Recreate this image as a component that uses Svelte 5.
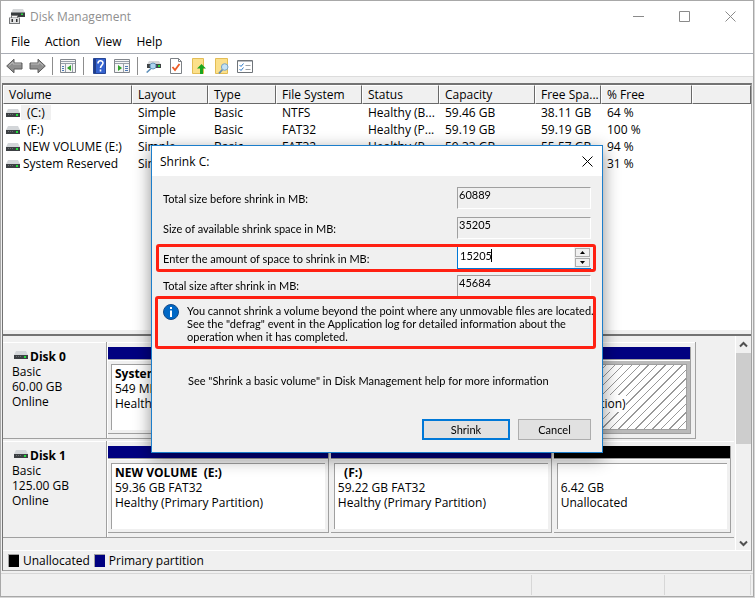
<script>
  const menus = ['File', 'Action', 'View', 'Help'];
  const columns = ['Volume', 'Layout', 'Type', 'File System', 'Status', 'Capacity', 'Free Spa...', '% Free', ''];
  const volumes = [
    ['(C:)', 'Simple', 'Basic', 'NTFS', 'Healthy (B...', '59.46 GB', '38.11 GB', '64 %', ''],
    ['(F:)', 'Simple', 'Basic', 'FAT32', 'Healthy (P...', '59.19 GB', '59.19 GB', '100 %', ''],
    ['NEW VOLUME (E:)', 'Simple', 'Basic', 'FAT32', 'Healthy (P...', '59.33 GB', '55.57 GB', '94 %', ''],
    ['System Reserved', 'Simple', 'Basic', 'NTFS', 'Healthy (S...', '549 MB', '169 MB', '31 %', '']
  ];
  const disks = [
    {
      name: 'Disk 0', size: '60.00 GB', short: true,
      parts: [
        { name: 'System Reserved', size: '549 MB NTFS', state: 'Healthy (System, Active)', grow: 196 },
        { name: '(C:)', size: '59.46 GB NTFS', state: 'Healthy (Boot, Page File, Crash Dump, Primary Partition)', grow: 385, selected: true }
      ]
    },
    {
      name: 'Disk 1', size: '125.00 GB', short: false,
      parts: [
        { name: 'NEW VOLUME  (E:)', size: '59.36 GB FAT32', state: 'Healthy (Primary Partition)', grow: 222 },
        { name: '  (F:)', size: '59.22 GB FAT32', state: 'Healthy (Primary Partition)', grow: 222 },
        { name: ' ', size: '6.42 GB', state: 'Unallocated', grow: 178, free: true }
      ]
    }
  ];
  let amount = $state('15205');
  const step = (n) => (amount = String(Number(amount) + n));
</script>

{#snippet drive()}
  <svg class="drive" width="14" height="8" viewBox="0 0 14 8" aria-hidden="true">
    <path d="M2 0h10l2 4H0z" fill="#d3d6d9" />
    <path d="M0 4h14v4H0z" fill="#3c4043" />
    <path d="M2 5.500h5" stroke="#6a6e72" stroke-dasharray="1 1" />
    <path d="M10 5h2v2h-2z" fill="#22e03c" />
  </svg>
{/snippet}

<div class="window">
  <header class="titlebar">
    <svg width="16" height="15" viewBox="0 0 16 15" aria-hidden="true">
      <path d="M4 0h10l2 4H2z" fill="#d5d7d9" />
      <path d="M2 3.500h14V8H2z" fill="#383c3e" />
      <path d="M12 4.500h2v1.500h-2z" fill="#27d83b" />
      <path d="M2.500 6.500h6v3h-6z" fill="#f4f4f4" stroke="#777" />
      <path d="M0 8.500h11V15H0z" fill="#77797b" />
      <path d="M1 9h9v5H1z" fill="#e2e3e4" />
      <path d="M2.500 10h1.500v3H2.500zM7 10h1.500v3H7z" fill="#333" />
    </svg>
    <h1>Disk Management</h1>
    <div class="controls">
      <button aria-label="Minimize"><svg width="11" height="11"><path d="M0 5.500h11" /></svg></button>
      <button aria-label="Maximize"><svg width="11" height="11"><path d="M.5.5h10v10H.5z" /></svg></button>
      <button aria-label="Close"><svg width="11" height="11"><path d="M.5.5l10 10M10.500.5l-10 10" /></svg></button>
    </div>
  </header>

  <nav class="menu">
    {#each menus as m}<button>{m}</button>{/each}
  </nav>

  <div class="toolbar">
    <button aria-label="Back"><svg width="17" height="16" viewBox="0 0 17 16"><path d="M.7 8L8 1.200V5h8v6H8v3.800z" fill="#8f8f8f" stroke="#5c5c5c" /><path d="M3 7.500L7 4v2h8" fill="none" stroke="#bcbcbc" /></svg></button>
    <button aria-label="Forward"><svg width="17" height="16" viewBox="0 0 17 16"><path d="M16.300 8L9 1.200V5H1v6h8v3.800z" fill="#8f8f8f" stroke="#5c5c5c" /><path d="M2 6h8V4l4 3.500" fill="none" stroke="#bcbcbc" /></svg></button>
    <i></i>
    <button aria-label="Show console tree"><svg width="16" height="14" viewBox="0 0 16 14"><path d="M.5.5h15v13H.5z" fill="#f5f5f5" stroke="#82868c" /><path d="M1 2.500h14M1 4.500h14M5.500 5v8M12.500 5v8" stroke="#98a0aa" /><path d="M2 7.500h2M2 9.500h2M2 11.500h2" stroke="#4d79b5" /><path d="M11 6v6L7 9z" fill="#2fa32b" /></svg></button>
    <i></i>
    <button aria-label="Help"><svg width="13" height="16" viewBox="0 0 13 16"><path d="M.5.5h12v15H.5z" fill="#3462cf" stroke="#274695" /><path d="M1 1h2v14H1z" fill="#203d88" /><path d="M5 5.500c0-3.500 5-3.500 5-.4 0 2-2.500 2.200-2.500 4.900M7.500 11.500v2" fill="none" stroke="#fff" stroke-width="1.600" /></svg></button>
    <button aria-label="Show action pane"><svg width="16" height="14" viewBox="0 0 16 14"><path d="M.5.5h15v13H.5z" fill="#f5f5f5" stroke="#82868c" /><path d="M1 2.500h14M1 4.500h14M9.500 5v8" stroke="#98a0aa" /><path d="M11 7.500h3M11 9.500h3M11 11.500h3" stroke="#4d79b5" /><path d="M4 6v6l4-3z" fill="#2fa32b" /></svg></button>
    <i></i>
    <button aria-label="Connect disk"><svg width="15" height="13" viewBox="0 0 15 13"><path d="M3 1h10l2 3.500H1z" fill="#d5d7d9" /><path d="M1 4h14v4H1z" fill="#404446" /><path d="M12 5h2v2h-2z" fill="#27d83b" /><path d="M5 8.500L.7 12.500" stroke="#5d8fb9" stroke-width="1.600" /><circle cx="7" cy="6" r="3" fill="#aed4ee" stroke="#6496ba" /></svg></button>
    <button aria-label="Check"><svg width="12" height="16" viewBox="0 0 12 16"><path d="M.5.5h8l3 3v12H.5z" fill="#fff" stroke="#7c8186" /><path d="M8.500.5v3h3" fill="none" stroke="#7c8186" /><path d="M2.500 9l2.500 3 4.500-6" fill="none" stroke="#ed5b24" stroke-width="1.800" /></svg></button>
    <button aria-label="Up folder"><svg width="14" height="16" viewBox="0 0 14 16"><path d="M.5.500H11.500V15.500H.5z" fill="#fbe08b" stroke="#e3bd55" /><path d="M9.500 6L14 10.500h-3V16H8v-5.500H5z" fill="#1ba51f" /></svg></button>
    <button aria-label="Find folder"><svg width="14" height="16" viewBox="0 0 14 16"><path d="M.5.5h12v15H.5z" fill="#fbe08b" stroke="#e3bd55" /><path d="M7.500 11.500L4 15.300" stroke="#668fb2" stroke-width="1.800" /><circle cx="9.700" cy="9" r="3.300" fill="#c4e2f5" stroke="#77a3c4" /></svg></button>
    <button aria-label="Options"><svg width="16" height="13" viewBox="0 0 16 13"><path d="M.5.5h15v12H.5z" fill="#fff" stroke="#6f7479" /><path d="M1 1.500h14" stroke="#b7bcc2" /><path d="M2.500 5l1.500 1.500 2.500-3M2.500 9l1.500 1.500 2.500-3" fill="none" stroke="#2a78c8" /><path d="M8.500 5.500h5M8.500 9.500h5" stroke="#9ba1a7" /></svg></button>
  </div>

  <main>
    <div class="list">
      <table>
        <colgroup>
          <col class="c1" /><col class="c2" /><col class="c3" /><col class="c4" /><col class="c5" /><col class="c6" /><col class="c7" /><col class="c8" /><col />
        </colgroup>
        <thead>
          <tr>{#each columns as c}<th scope="col">{c}</th>{/each}</tr>
        </thead>
        <tbody>
          {#each volumes as row, r}
            <tr>
              {#each row as cell, i}
                {#if i === 0}
                  <td><div class="vol">{@render drive()}<span class:indent={r < 2} class:current={r === 0}>{cell}</span></div></td>
                {:else}
                  <td>{cell}</td>
                {/if}
              {/each}
            </tr>
          {/each}
        </tbody>
      </table>
    </div>
    <div class="splitter"></div>

    <div class="lower">
      <div class="disks">
        {#each disks as d}
          <section class="disk">
            <div class="info">
              <h2>{@render drive()}{d.name}</h2>
              <p>Basic</p>
              <p>{d.size}</p>
              <p>Online</p>
            </div>
            <div class="map" class:short={d.short}>
              {#each d.parts as p}
                <div class="part" class:free={p.free} class:selected={p.selected} style:flex-grow={p.grow}>
                  <div class="bar"></div>
                  <div class="frame">
                    <div class="box">
                      <p><b>{p.name}</b></p>
                      <p><span>{p.size}</span></p>
                      <p><span>{p.state}</span></p>
                    </div>
                  </div>
                </div>
              {/each}
            </div>
          </section>
        {/each}
      </div>
      <div class="scroll">
        <button aria-label="Scroll up"><svg width="9" height="7"><path d="M1 5.500l3.500-3.500L8 5.500" /></svg></button>
        <div class="thumb"></div>
        <button aria-label="Scroll down"><svg width="9" height="7"><path d="M1 1.500L4.500 5 8 1.500" /></svg></button>
      </div>
    </div>

    <div class="legend">
      <span class="swatch black"></span>Unallocated
      <span class="swatch"></span>Primary partition
    </div>
  </main>

  <footer><span></span><span></span><span></span></footer>
</div>

<div class="overlay">
  <form class="dialog" aria-label="Shrink C:" onsubmit={(e) => e.preventDefault()}>
    <div class="caption">
      <h2>Shrink C:</h2>
      <button type="button" aria-label="Close dialog"><svg width="11" height="11"><path d="M.5.5l10 10M10.500.5l-10 10" /></svg></button>
    </div>
    <div class="row">
      <label for="before">Total size before shrink in MB:</label>
      <output id="before">60889</output>
    </div>
    <div class="row second">
      <label for="available">Size of available shrink space in MB:</label>
      <output id="available">35205</output>
    </div>
    <div class="row marked">
      <label for="amount">Enter the amount of space to shrink in MB:</label>
      <div class="spin">
        <input id="amount" type="text" inputmode="numeric" bind:value={amount} />
        <span class="caret"></span>
        <div class="arrows">
          <button type="button" aria-label="Increase" onclick={() => step(1)}><svg width="5" height="3"><path d="M0 3h5L2.500 0z" /></svg></button>
          <button type="button" aria-label="Decrease" onclick={() => step(-1)}><svg width="5" height="3"><path d="M0 0h5L2.500 3z" /></svg></button>
        </div>
      </div>
    </div>
    <div class="row last">
      <label for="after">Total size after shrink in MB:</label>
      <output id="after">45684</output>
    </div>
    <div class="notice">
      <svg width="16" height="16" viewBox="0 0 16 16" aria-hidden="true"><circle cx="8" cy="8" r="7.500" fill="#0068c6" stroke="#174a86" /><path d="M7 3h2v2H7zM7 6.500h2V13H7z" fill="#fff" /></svg>
      <p>You cannot shrink a volume beyond the point where any unmovable files are located.<br />See the "defrag" event in the Application log for detailed information about the<br />operation when it has completed.</p>
    </div>
    <p class="more">See "Shrink a basic volume" in Disk Management help for more information</p>
    <div class="actions">
      <button class="primary">Shrink</button>
      <button type="button">Cancel</button>
    </div>
  </form>
</div>

<style>
  :global(body) { margin: 0; background: #d6d6d6; }
  :global(*) { box-sizing: border-box; }
  h1, h2, p { margin: 0; font-size: inherit; font-weight: 400; }
  button { font: inherit; color: inherit; background: none; border: 0; padding: 0; }
  svg { display: block; flex: none; }

  .window {
    display: flex; flex-direction: column;
    min-height: calc(100vh - 1px); margin: 0 1px 1px 0;
    border: 1px solid #a8a8a8; background: #f0f0f0;
    font: 12px/15px "Open Sans", "Noto Sans", sans-serif; color: #000;
  }
  .titlebar { display: flex; align-items: center; height: 30px; padding-left: 8px; gap: 5px; background: #fff; color: #8f8f8f; }
  .controls { display: flex; margin-left: auto; }
  .controls button { display: flex; align-items: center; justify-content: center; width: 46px; height: 28px; }
  .controls path { fill: none; stroke: #8a8a8a; }
  .menu { display: flex; height: 23px; padding: 0 0 1px 10px; gap: 15px; background: #fff; border-bottom: 1px solid #a9adb5; }
  .toolbar { display: flex; align-items: center; height: 23px; padding: 2px 0 0 5px; gap: 7px; background: #fff; border-bottom: 1px solid #dcdcdc; }
  .toolbar i { width: 1px; height: 18px; background: #8d8d8d; }
  .toolbar button { display: flex; justify-content: center; width: 16px; }

  main { display: flex; flex-direction: column; flex: 1; margin: 6px 1px 2px; border: 2px solid #737373; border-color: #737373 #a0a0a0 #a0a0a0 #737373; border-width: 2px 1px 1px; }
  .list { flex: 1; background: #fff; }
  table { width: 100%; table-layout: fixed; border-collapse: separate; border-spacing: 0; }
  .c1 { width: 129px; } .c2 { width: 76px; } .c3 { width: 68px; } .c4 { width: 86px; }
  .c5 { width: 77px; } .c6 { width: 96px; } .c7 { width: 66px; } .c8 { width: 91px; }
  th, td { padding: 0 0 0 6px; text-align: left; font-weight: 400; white-space: nowrap; overflow: hidden; }
  th { height: 19px; background: #f0f0f0; border: 1px solid #fff; border-right-color: #696969; border-bottom-color: #696969; padding-left: 5px; }
  td { height: 17px; }
  td:first-child { padding-left: 3px; }
  .vol { display: flex; align-items: center; gap: 3px; }
  .vol .indent { padding: 0 6px; margin-left: -2px; }
  .current { background: #f0f0f0; }
  .splitter { height: 7px; background: #f0f0f0; border: solid #fff; border-width: 1px 0; border-bottom: 2px solid #737373; }

  .lower { display: flex; }
  .disks { flex: 1; min-width: 0; padding: 6px 0 12px; }
  .disk { display: flex; height: 97px; margin-bottom: 2px; }
  .disk:last-child { margin-bottom: 0; }
  .info { width: 104px; padding: 7px 9px; border: 1px solid #a0a0a0; border-width: 0 1px 1px 0; box-shadow: inset 0 1px #fff, 1px 0 #fff; }
  .info h2 { display: flex; gap: 2px; padding-left: 2px; font-weight: 700; }
  .info .drive { margin-top: 2px; }
  .map { display: flex; flex: 1; min-width: 0; margin-right: 1px; padding: 5px 3px 4px 1px; gap: 2px; border-bottom: 1px solid #a0a0a0; box-shadow: inset 0 1px #fff; }
  .map.short { margin-right: 39px; padding-right: 4px; border-right: 1px solid #a0a0a0; }
  .part { display: flex; flex-direction: column; flex-basis: 0; min-width: 0; }
  .part { border-right: 1px solid #a0a0a0; border-bottom: 1px solid #a0a0a0; }
  .bar { height: 13px; background: #000080; border-bottom: 1px solid #a0a0a0; }
  .free .bar { background: #000; }
  .frame { flex: 1; padding: 3px; border-top: 1px solid #fff; }
  .box { height: 100%; padding: 1px 3px; background: #fff; border: solid #a0a0a0; border-width: 1px 0 0 1px; }
  .box p { white-space: pre; }
  .selected .frame { background: #bababa; }
  .selected .box { border-width: 1px; background: repeating-linear-gradient(135deg, #fff 0 5px, #999 5px 6px); }
  .selected .box span { background: #fff; }
  .scroll { display: flex; flex-direction: column; width: 16px; border-left: 1px solid #fff; }
  .scroll button { display: flex; align-items: center; justify-content: center; height: 17px; }
  .scroll button:last-child { margin-top: auto; height: 14px; }
  .scroll path { fill: none; stroke: #505050; stroke-width: 2; }
  .thumb { height: 91px; background: #cdcdcd; }
  .legend { display: flex; align-items: center; height: 20px; padding-left: 5px; gap: 4px; border-top: 1px solid #fff; }
  .swatch { width: 11px; height: 13px; background: #000080; box-shadow: inset 1px 1px #a0a0a0; }
  .black { background: #000; }

  footer { display: flex; height: 23px; border-top: 1px solid #d7d7d7; padding: 1px 2px 1px 0; }
  footer span { border-right: 1px solid #d7d7d7; flex: 85 0 0; }
  footer span:first-child { flex-grow: 533; }
  footer span:nth-child(2) { flex-grow: 133; }

  .overlay { position: fixed; inset: 0; display: flex; align-items: center; justify-content: center; padding-right: 1px; }
  .dialog {
    width: 452px; border: 1px solid #1c7ecb; background: #f0f0f0;
    box-shadow: 0 5px 16px rgba(0, 0, 0, .45);
    font: 11px/13px Lato, "Liberation Sans", sans-serif; color: #000;
  }
  .caption { display: flex; align-items: center; justify-content: space-between; height: 30px; padding: 0 9px 0 8px; margin-bottom: 11px; background: #fff; font: 12px/15px "Open Sans", "Noto Sans", sans-serif; }
  .caption path { fill: none; stroke: #000; }
  .row { display: flex; align-items: center; justify-content: space-between; height: 22px; margin: 0 11px; }
  .second { margin-top: 8px; }
  output, .spin { width: 134px; height: 22px; }
  output { padding: 0 1px; border: 1px solid #fff; border-top-color: #a0a0a0; border-left-color: #a0a0a0; }
  .marked { height: 28px; margin: 5px 6px 3px 4px; padding: 0 2px 0 4px; border: 3px solid #ff2012; border-radius: 3px; }
  .spin { position: relative; display: flex; background: #fff; border: solid #0078d7; border-width: 0 0 1px 1px; }
  input { flex: 1; min-width: 0; padding: 0 0 4px 2px; border: 0; outline: 0; background: none; font: inherit; color: inherit; }
  .caret { position: absolute; left: 33px; top: 2px; width: 1px; height: 13px; background: #000; }
  .arrows { display: flex; flex-direction: column; gap: 1px; width: 17px; padding: 1px; background: #f0f0f0; }
  .arrows button { display: flex; flex: 1; align-items: center; justify-content: center; border: 1px solid #acacac; }
  .last { height: 21px; }
  .last output { height: 21px; border-bottom: 0; }
  .notice { display: flex; gap: 8px; height: 53px; margin: 0 6px 0 3px; padding: 5px 0 0 5px; border: 3px solid #ff2012; border-radius: 3px; white-space: nowrap; }
  .more { margin: 25px 0 32px 36px; }
  .actions { display: flex; justify-content: flex-end; gap: 8px; padding: 0 11px 12px; }
  .actions button { width: 73px; height: 21px; border: 1px solid #adadad; background: #e1e1e1; }
  .actions .primary { width: 88px; border: 2px solid #0078d7; }
</style>
